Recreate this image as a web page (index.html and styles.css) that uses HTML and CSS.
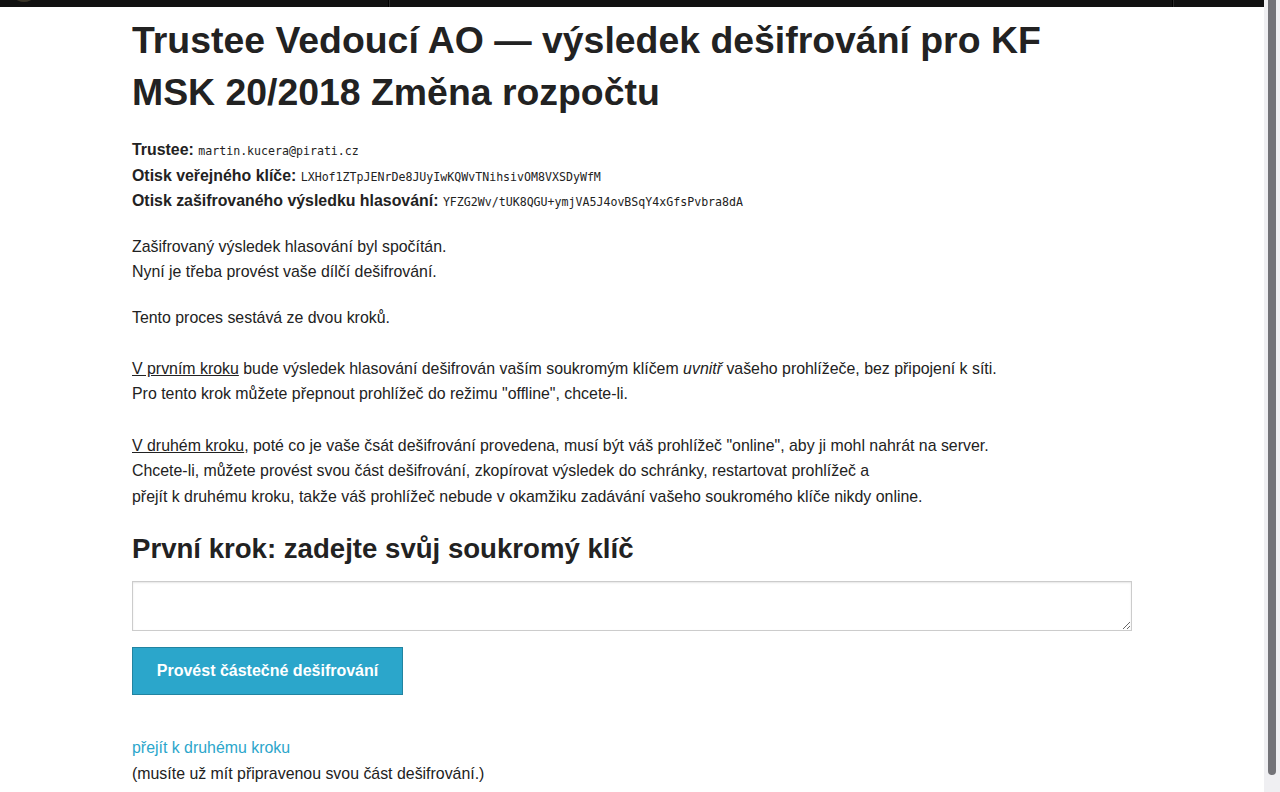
FILE: index.html
```html
<!DOCTYPE html>
<html lang="cs">
<head>
<meta charset="utf-8">
<title>Trustee – dešifrování</title>
<link rel="stylesheet" href="styles.css">
</head>
<body>
<div class="viewport">
  <div class="page">
    <div class="topbar">
      <span class="logo"></span>
      <span class="divider d1"></span>
      <span class="divider d2"></span>
    </div>
    <main class="container">
      <h1 class="title">Trustee Vedoucí AO — výsledek dešifrování pro KF MSK 20/2018 Změna rozpočtu</h1>
      <p class="meta">
        <b>Trustee:</b> <tt>martin.kucera@pirati.cz</tt><br>
        <b>Otisk veřejného klíče:</b> <tt>LXHof1ZTpJENrDe8JUyIwKQWvTNihsivOM8VXSDyWfM</tt><br>
        <b>Otisk zašifrovaného výsledku hlasování:</b> <tt>YFZG2Wv/tUK8QGU+ymjVA5J4ovBSqY4xGfsPvbra8dA</tt>
      </p>
      <p>Zašifrovaný výsledek hlasování byl spočítán.<br>Nyní je třeba provést vaše dílčí dešifrování.</p>
      <p>Tento proces sestává ze dvou kroků.<br><br>
        <u>V prvním kroku</u> bude výsledek hlasování dešifrován vaším soukromým klíčem <em>uvnitř</em> vašeho prohlížeče, bez připojení k síti.<br>
        Pro tento krok můžete přepnout prohlížeč do režimu "offline", chcete-li.<br><br>
        <u>V druhém kroku</u>, poté co je vaše čsát dešifrování provedena, musí být váš prohlížeč "online", aby ji mohl nahrát na server.<br>
        Chcete-li, můžete provést svou část dešifrování, zkopírovat výsledek do schránky, restartovat prohlížeč a<br>
        přejít k druhému kroku, takže váš prohlížeč nebude v okamžiku zadávání vašeho soukromého klíče nikdy online.
      </p>
      <h3 class="step">První krok: zadejte svůj soukromý klíč</h3>
      <textarea class="key"></textarea>
      <button class="button" type="button">Provést částečné dešifrování</button>
      <p class="next"><a href="#">přejít k druhému kroku</a><br>(musíte už mít připravenou svou část dešifrování.)</p>
    </main>
  </div>
  <div class="scrollbar"><div class="thumb"></div></div>
</div>
</body>
</html>
```
FILE: styles.css
```css
html, body {
  margin: 0;
  padding: 0;
  height: 100%;
  overflow: hidden;
  background: #fff;
}
body {
  font-family: "Liberation Sans", Arial, Helvetica, sans-serif;
  color: #222;
  font-size: 15.9px;
  line-height: 25.6px;
}
.viewport {
  display: flex;
  height: 792px;
}
.page {
  flex: 1;
  overflow: hidden;
}
.topbar {
  height: 7px;
  background: #111;
  position: relative;
}
.logo {
  position: absolute;
  left: 16px;
  top: -6px;
  width: 16px;
  height: 8px;
  border-radius: 50%;
  background: #3a3528;
}
.divider {
  position: absolute;
  top: 0;
  width: 1px;
  height: 7px;
  background: #000;
  box-shadow: 1px 0 0 #2a2a2a;
}
.d1 { left: 388px; }
.d2 { left: 1172px; }
.container {
  width: 1000px;
  margin: 0 auto;
}
.title {
  font-size: 37.4px;
  line-height: 52px;
  font-weight: bold;
  margin: 7px 0 19px;
  max-width: 960px;
  color: #222;
}
p {
  margin: 0 0 20px;
}
.meta {
  line-height: 25.5px;
}
tt {
  font-family: "DejaVu Sans Mono", monospace;
  font-size: 11.6px;
  line-height: 1;
}
em { font-style: italic; }
.step {
  font-size: 27.6px;
  line-height: 40px;
  font-weight: bold;
  margin: 18px 0 12px;
}
.key {
  display: block;
  box-sizing: border-box;
  width: 100%;
  height: 50px;
  margin: 0 0 16px;
  border: 1px solid #ccc;
  box-shadow: inset 0 1px 2px rgba(0,0,0,0.1);
  font-family: inherit;
  font-size: 14px;
  padding: 8px;
  resize: vertical;
}
.button {
  display: block;
  box-sizing: border-box;
  font-family: inherit;
  font-size: 16px;
  font-weight: bold;
  line-height: 46px;
  white-space: nowrap;
  text-align: center;
  color: #fff;
  background: #2ba6cb;
  border: 1px solid #2284a1;
  padding: 0;
  height: 48px;
  width: 271px;
  margin: 0 0 40px;
  cursor: pointer;
}
.next a {
  color: #2ba6cb;
  text-decoration: none;
}
.scrollbar {
  width: 16px;
  background: #efeff2;
  display: flex;
  justify-content: center;
}
.thumb {
  width: 8px;
  height: 775px;
  background: #737378;
  border-radius: 0 0 4px 4px;
}
```
